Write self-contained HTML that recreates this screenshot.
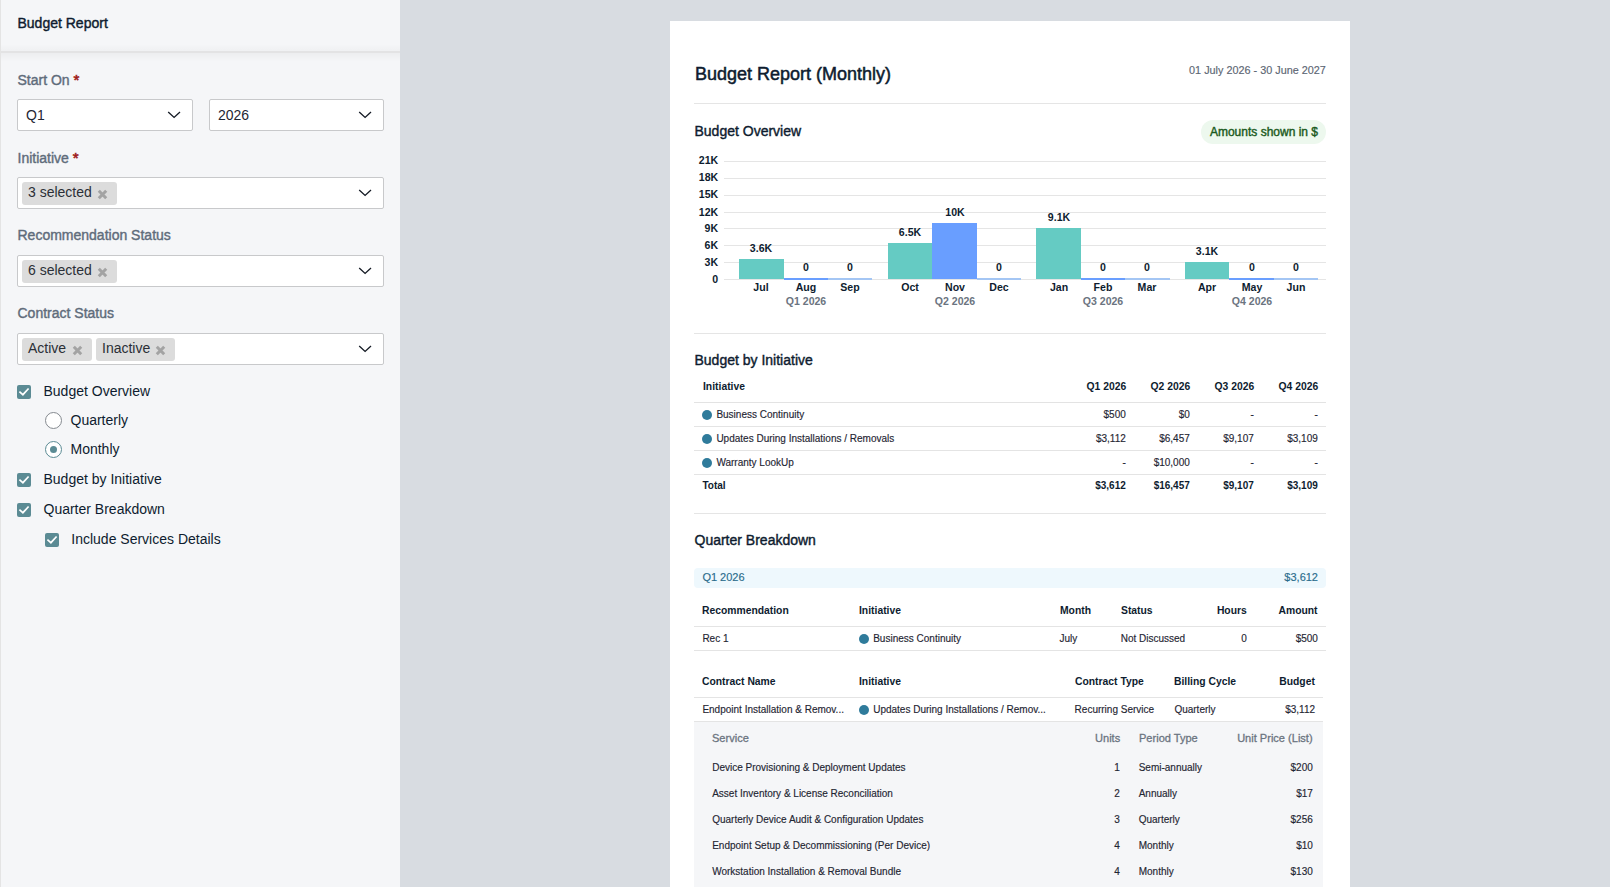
<!DOCTYPE html>
<html><head><meta charset="utf-8"><title>Budget Report</title>
<style>
html,body{margin:0;padding:0;width:1610px;height:887px;overflow:hidden;background:#d8dce1;}
body{position:relative;font-family:'Liberation Sans', sans-serif;}
.t{position:absolute;white-space:nowrap;line-height:1;}
.b{position:absolute;}
</style></head><body>
<div class="b" style="left:0px;top:0px;width:400px;height:887px;background:#f5f6f8;"></div>
<div class="b" style="left:0px;top:0px;width:1px;height:887px;background:#e4e4e4;"></div>
<div class="b" style="left:1px;top:44px;width:399px;height:7px;background:linear-gradient(rgba(0,0,0,0),rgba(0,0,0,0.022));"></div>
<div class="b" style="left:1px;top:51px;width:399px;height:1.5px;background:#e3e3e4;"></div>
<div class="b" style="left:1px;top:52.5px;width:399px;height:9px;background:linear-gradient(rgba(0,0,0,0.035),rgba(0,0,0,0));"></div>
<div class="t" style="left:17.50px;top:15.95px;font-size:14px;font-weight:normal;color:#0e1c2f;-webkit-text-stroke:0.4px #0e1c2f;">Budget Report</div>
<div class="t" style="left:17.50px;top:71.75px;font-size:14px;font-weight:normal;color:#5f6c7b;-webkit-text-stroke:0.4px #5f6c7b;">Start On <span style="color:#9f1d1d;-webkit-text-stroke:0.6px #9f1d1d;font-size:15px">*</span></div>
<div class="b" style="left:17px;top:99px;width:176px;height:32px;background:#fff;border:1px solid #c8c9cb;border-radius:2px;box-sizing:border-box;"></div>
<svg width="15" height="8" viewBox="0 0 15 8" style="position:absolute;left:167px;top:111px"><path d="M1.2 1 L7.1 6.4 L13 1" fill="none" stroke="#141a24" stroke-width="1.35"/></svg>
<div class="t" style="left:26.00px;top:108.35px;font-size:14px;font-weight:normal;color:#1f2633;">Q1</div>
<div class="b" style="left:209px;top:99px;width:175px;height:32px;background:#fff;border:1px solid #c8c9cb;border-radius:2px;box-sizing:border-box;"></div>
<svg width="15" height="8" viewBox="0 0 15 8" style="position:absolute;left:358px;top:111px"><path d="M1.2 1 L7.1 6.4 L13 1" fill="none" stroke="#141a24" stroke-width="1.35"/></svg>
<div class="t" style="left:218.00px;top:108.35px;font-size:14px;font-weight:normal;color:#1f2633;">2026</div>
<div class="t" style="left:17.50px;top:149.95px;font-size:14px;font-weight:normal;color:#5f6c7b;-webkit-text-stroke:0.4px #5f6c7b;">Initiative <span style="color:#9f1d1d;-webkit-text-stroke:0.6px #9f1d1d;font-size:15px">*</span></div>
<div class="b" style="left:17px;top:177px;width:367px;height:32px;background:#fff;border:1px solid #c8c9cb;border-radius:2px;box-sizing:border-box;"></div>
<svg width="15" height="8" viewBox="0 0 15 8" style="position:absolute;left:358px;top:189px"><path d="M1.2 1 L7.1 6.4 L13 1" fill="none" stroke="#141a24" stroke-width="1.35"/></svg>
<div class="b" style="left:22px;top:182px;width:95px;height:23px;background:#dcdcdc;border-radius:3px;"></div>
<div class="t" style="left:28.00px;top:184.95px;font-size:14px;font-weight:normal;color:#2b2f36;">3 selected</div>
<svg width="11" height="11" viewBox="0 0 11 11" style="position:absolute;left:97.2px;top:189px"><path d="M1.8 1.8 L9.2 9.2 M9.2 1.8 L1.8 9.2" stroke="#a3a3a3" stroke-width="3" stroke-linecap="butt"/></svg>
<div class="t" style="left:17.50px;top:227.85px;font-size:14px;font-weight:normal;color:#5f6c7b;-webkit-text-stroke:0.4px #5f6c7b;">Recommendation Status</div>
<div class="b" style="left:17px;top:255px;width:367px;height:32px;background:#fff;border:1px solid #c8c9cb;border-radius:2px;box-sizing:border-box;"></div>
<svg width="15" height="8" viewBox="0 0 15 8" style="position:absolute;left:358px;top:267px"><path d="M1.2 1 L7.1 6.4 L13 1" fill="none" stroke="#141a24" stroke-width="1.35"/></svg>
<div class="b" style="left:22px;top:260px;width:95px;height:23px;background:#dcdcdc;border-radius:3px;"></div>
<div class="t" style="left:28.00px;top:262.95px;font-size:14px;font-weight:normal;color:#2b2f36;">6 selected</div>
<svg width="11" height="11" viewBox="0 0 11 11" style="position:absolute;left:97.2px;top:267px"><path d="M1.8 1.8 L9.2 9.2 M9.2 1.8 L1.8 9.2" stroke="#a3a3a3" stroke-width="3" stroke-linecap="butt"/></svg>
<div class="t" style="left:17.50px;top:305.85px;font-size:14px;font-weight:normal;color:#5f6c7b;-webkit-text-stroke:0.4px #5f6c7b;">Contract Status</div>
<div class="b" style="left:17px;top:333px;width:367px;height:32px;background:#fff;border:1px solid #c8c9cb;border-radius:2px;box-sizing:border-box;"></div>
<svg width="15" height="8" viewBox="0 0 15 8" style="position:absolute;left:358px;top:345px"><path d="M1.2 1 L7.1 6.4 L13 1" fill="none" stroke="#141a24" stroke-width="1.35"/></svg>
<div class="b" style="left:22px;top:338px;width:70px;height:23px;background:#dcdcdc;border-radius:3px;"></div>
<div class="t" style="left:28.00px;top:340.95px;font-size:14px;font-weight:normal;color:#2b2f36;">Active</div>
<svg width="11" height="11" viewBox="0 0 11 11" style="position:absolute;left:72.2px;top:345px"><path d="M1.8 1.8 L9.2 9.2 M9.2 1.8 L1.8 9.2" stroke="#a3a3a3" stroke-width="3" stroke-linecap="butt"/></svg>
<div class="b" style="left:96px;top:338px;width:79px;height:23px;background:#dcdcdc;border-radius:3px;"></div>
<div class="t" style="left:102.00px;top:340.95px;font-size:14px;font-weight:normal;color:#2b2f36;">Inactive</div>
<svg width="11" height="11" viewBox="0 0 11 11" style="position:absolute;left:155.2px;top:345px"><path d="M1.8 1.8 L9.2 9.2 M9.2 1.8 L1.8 9.2" stroke="#a3a3a3" stroke-width="3" stroke-linecap="butt"/></svg>
<div class="b" style="left:17px;top:385px;width:14px;height:14px;background:#5b8b94;border-radius:2px;"><svg width="14" height="14" viewBox="0 0 14 14" style="position:absolute;left:0;top:0"><path d="M2.4 6.7 L5.9 9.7 L11.6 3.5" fill="none" stroke="#fff" stroke-width="1.7"/></svg></div>
<div class="t" style="left:43.50px;top:384.35px;font-size:14px;font-weight:normal;color:#0e1c2f;">Budget Overview</div>
<div class="b" style="left:45px;top:412px;width:17px;height:17px;border:1px solid #858a90;border-radius:50%;box-sizing:border-box;background:#fff;"></div>
<div class="t" style="left:70.50px;top:412.75px;font-size:14px;font-weight:normal;color:#0e1c2f;">Quarterly</div>
<div class="b" style="left:45px;top:441px;width:17px;height:17px;border:1px solid #5b8b94;border-radius:50%;box-sizing:border-box;background:#fff;"></div>
<div class="b" style="left:50px;top:446px;width:7px;height:7px;background:#5b8b94;border-radius:50%;"></div>
<div class="t" style="left:70.50px;top:441.75px;font-size:14px;font-weight:normal;color:#0e1c2f;">Monthly</div>
<div class="b" style="left:17px;top:473px;width:14px;height:14px;background:#5b8b94;border-radius:2px;"><svg width="14" height="14" viewBox="0 0 14 14" style="position:absolute;left:0;top:0"><path d="M2.4 6.7 L5.9 9.7 L11.6 3.5" fill="none" stroke="#fff" stroke-width="1.7"/></svg></div>
<div class="t" style="left:43.50px;top:472.35px;font-size:14px;font-weight:normal;color:#0e1c2f;">Budget by Initiative</div>
<div class="b" style="left:17px;top:503px;width:14px;height:14px;background:#5b8b94;border-radius:2px;"><svg width="14" height="14" viewBox="0 0 14 14" style="position:absolute;left:0;top:0"><path d="M2.4 6.7 L5.9 9.7 L11.6 3.5" fill="none" stroke="#fff" stroke-width="1.7"/></svg></div>
<div class="t" style="left:43.50px;top:502.35px;font-size:14px;font-weight:normal;color:#0e1c2f;">Quarter Breakdown</div>
<div class="b" style="left:45px;top:533px;width:14px;height:14px;background:#5b8b94;border-radius:2px;"><svg width="14" height="14" viewBox="0 0 14 14" style="position:absolute;left:0;top:0"><path d="M2.4 6.7 L5.9 9.7 L11.6 3.5" fill="none" stroke="#fff" stroke-width="1.7"/></svg></div>
<div class="t" style="left:71.30px;top:532.35px;font-size:14px;font-weight:normal;color:#0e1c2f;">Include Services Details</div>
<div class="b" style="left:400px;top:0px;width:1210px;height:887px;background:#d8dce1;"></div>
<div class="b" style="left:670px;top:21px;width:680px;height:866px;background:#fff;"></div>
<div class="t" style="left:695.00px;top:64.76px;font-size:18px;font-weight:normal;color:#0e1c2f;-webkit-text-stroke:0.5px #0e1c2f;">Budget Report (Monthly)</div>
<div class="t" style="right:284.40px;top:65.29px;font-size:11px;font-weight:normal;color:#5c6673;-webkit-text-stroke:0.15px #5c6673;transform:scaleX(0.985);transform-origin:right center;">01 July 2026 - 30 June 2027</div>
<div class="b" style="left:694px;top:103px;width:632px;height:1px;background:#e5e5e5;"></div>
<div class="t" style="left:694.50px;top:124.15px;font-size:14px;font-weight:normal;color:#0e1c2f;-webkit-text-stroke:0.4px #0e1c2f;">Budget Overview</div>
<div class="b" style="left:1201px;top:120px;width:125px;height:24px;background:#edf8ee;border-radius:12px;"></div>
<div class="t" style="right:292.00px;top:126.24px;font-size:12px;font-weight:normal;color:#1b5a20;-webkit-text-stroke:0.4px #1b5a20;">Amounts shown in $</div>
<div class="b" style="left:724px;top:279px;width:602px;height:1px;background:#e5e5e5;"></div>
<div class="t" style="right:891.50px;top:273.89px;font-size:11px;font-weight:bold;color:#0e1c2f;transform:scaleX(0.96);transform-origin:right center;">0</div>
<div class="b" style="left:724px;top:262px;width:602px;height:1px;background:#e5e5e5;"></div>
<div class="t" style="right:891.50px;top:256.89px;font-size:11px;font-weight:bold;color:#0e1c2f;transform:scaleX(0.96);transform-origin:right center;">3K</div>
<div class="b" style="left:724px;top:245px;width:602px;height:1px;background:#e5e5e5;"></div>
<div class="t" style="right:891.50px;top:239.89px;font-size:11px;font-weight:bold;color:#0e1c2f;transform:scaleX(0.96);transform-origin:right center;">6K</div>
<div class="b" style="left:724px;top:228px;width:602px;height:1px;background:#e5e5e5;"></div>
<div class="t" style="right:891.50px;top:222.89px;font-size:11px;font-weight:bold;color:#0e1c2f;transform:scaleX(0.96);transform-origin:right center;">9K</div>
<div class="b" style="left:724px;top:212px;width:602px;height:1px;background:#e5e5e5;"></div>
<div class="t" style="right:891.50px;top:206.89px;font-size:11px;font-weight:bold;color:#0e1c2f;transform:scaleX(0.96);transform-origin:right center;">12K</div>
<div class="b" style="left:724px;top:195px;width:602px;height:1px;background:#e5e5e5;"></div>
<div class="t" style="right:891.50px;top:188.89px;font-size:11px;font-weight:bold;color:#0e1c2f;transform:scaleX(0.96);transform-origin:right center;">15K</div>
<div class="b" style="left:724px;top:178px;width:602px;height:1px;background:#e5e5e5;"></div>
<div class="t" style="right:891.50px;top:171.89px;font-size:11px;font-weight:bold;color:#0e1c2f;transform:scaleX(0.96);transform-origin:right center;">18K</div>
<div class="b" style="left:724px;top:161px;width:602px;height:1px;background:#e5e5e5;"></div>
<div class="t" style="right:891.50px;top:154.89px;font-size:11px;font-weight:bold;color:#0e1c2f;transform:scaleX(0.96);transform-origin:right center;">21K</div>
<div class="b" style="left:739px;top:258.94px;width:45px;height:20.26px;background:#65cbc3;"></div>
<div class="t" style="left:461.30px;width:600px;text-align:center;top:243.13px;font-size:11px;font-weight:bold;color:#0e1c2f;transform:scaleX(0.96);transform-origin:center center;">3.6K</div>
<div class="t" style="left:461.30px;width:600px;text-align:center;top:282.19px;font-size:11px;font-weight:bold;color:#0e1c2f;transform:scaleX(0.96);transform-origin:center center;">Jul</div>
<div class="b" style="left:784px;top:277.5px;width:44px;height:2px;background:#699eff;"></div>
<div class="t" style="left:505.70px;width:600px;text-align:center;top:261.79px;font-size:11px;font-weight:bold;color:#0e1c2f;transform:scaleX(0.96);transform-origin:center center;">0</div>
<div class="t" style="left:505.70px;width:600px;text-align:center;top:282.19px;font-size:11px;font-weight:bold;color:#0e1c2f;transform:scaleX(0.96);transform-origin:center center;">Aug</div>
<div class="b" style="left:828px;top:277.5px;width:44px;height:2px;background:#a4c6f4;"></div>
<div class="t" style="left:550.10px;width:600px;text-align:center;top:261.79px;font-size:11px;font-weight:bold;color:#0e1c2f;transform:scaleX(0.96);transform-origin:center center;">0</div>
<div class="t" style="left:550.10px;width:600px;text-align:center;top:282.19px;font-size:11px;font-weight:bold;color:#0e1c2f;transform:scaleX(0.96);transform-origin:center center;">Sep</div>
<div class="t" style="left:505.70px;width:600px;text-align:center;top:295.99px;font-size:11px;font-weight:bold;color:#6b7480;transform:scaleX(0.96);transform-origin:center center;">Q1 2026</div>
<div class="b" style="left:888px;top:242.98px;width:44px;height:36.22px;background:#65cbc3;"></div>
<div class="t" style="left:610.20px;width:600px;text-align:center;top:227.17px;font-size:11px;font-weight:bold;color:#0e1c2f;transform:scaleX(0.96);transform-origin:center center;">6.5K</div>
<div class="t" style="left:610.20px;width:600px;text-align:center;top:282.19px;font-size:11px;font-weight:bold;color:#0e1c2f;transform:scaleX(0.96);transform-origin:center center;">Oct</div>
<div class="b" style="left:932px;top:223.1px;width:45px;height:56.1px;background:#699eff;"></div>
<div class="t" style="left:654.60px;width:600px;text-align:center;top:207.29px;font-size:11px;font-weight:bold;color:#0e1c2f;transform:scaleX(0.96);transform-origin:center center;">10K</div>
<div class="t" style="left:654.60px;width:600px;text-align:center;top:282.19px;font-size:11px;font-weight:bold;color:#0e1c2f;transform:scaleX(0.96);transform-origin:center center;">Nov</div>
<div class="b" style="left:977px;top:277.5px;width:44px;height:2px;background:#a4c6f4;"></div>
<div class="t" style="left:699.00px;width:600px;text-align:center;top:261.79px;font-size:11px;font-weight:bold;color:#0e1c2f;transform:scaleX(0.96);transform-origin:center center;">0</div>
<div class="t" style="left:699.00px;width:600px;text-align:center;top:282.19px;font-size:11px;font-weight:bold;color:#0e1c2f;transform:scaleX(0.96);transform-origin:center center;">Dec</div>
<div class="t" style="left:654.60px;width:600px;text-align:center;top:295.99px;font-size:11px;font-weight:bold;color:#6b7480;transform:scaleX(0.96);transform-origin:center center;">Q2 2026</div>
<div class="b" style="left:1036px;top:228.11px;width:45px;height:51.09px;background:#65cbc3;"></div>
<div class="t" style="left:758.60px;width:600px;text-align:center;top:212.30px;font-size:11px;font-weight:bold;color:#0e1c2f;transform:scaleX(0.96);transform-origin:center center;">9.1K</div>
<div class="t" style="left:758.60px;width:600px;text-align:center;top:282.19px;font-size:11px;font-weight:bold;color:#0e1c2f;transform:scaleX(0.96);transform-origin:center center;">Jan</div>
<div class="b" style="left:1081px;top:277.5px;width:44px;height:2px;background:#699eff;"></div>
<div class="t" style="left:803.00px;width:600px;text-align:center;top:261.79px;font-size:11px;font-weight:bold;color:#0e1c2f;transform:scaleX(0.96);transform-origin:center center;">0</div>
<div class="t" style="left:803.00px;width:600px;text-align:center;top:282.19px;font-size:11px;font-weight:bold;color:#0e1c2f;transform:scaleX(0.96);transform-origin:center center;">Feb</div>
<div class="b" style="left:1125px;top:277.5px;width:45px;height:2px;background:#a4c6f4;"></div>
<div class="t" style="left:847.40px;width:600px;text-align:center;top:261.79px;font-size:11px;font-weight:bold;color:#0e1c2f;transform:scaleX(0.96);transform-origin:center center;">0</div>
<div class="t" style="left:847.40px;width:600px;text-align:center;top:282.19px;font-size:11px;font-weight:bold;color:#0e1c2f;transform:scaleX(0.96);transform-origin:center center;">Mar</div>
<div class="t" style="left:803.00px;width:600px;text-align:center;top:295.99px;font-size:11px;font-weight:bold;color:#6b7480;transform:scaleX(0.96);transform-origin:center center;">Q3 2026</div>
<div class="b" style="left:1185px;top:261.76px;width:44px;height:17.44px;background:#65cbc3;"></div>
<div class="t" style="left:907.20px;width:600px;text-align:center;top:245.95px;font-size:11px;font-weight:bold;color:#0e1c2f;transform:scaleX(0.96);transform-origin:center center;">3.1K</div>
<div class="t" style="left:907.20px;width:600px;text-align:center;top:282.19px;font-size:11px;font-weight:bold;color:#0e1c2f;transform:scaleX(0.96);transform-origin:center center;">Apr</div>
<div class="b" style="left:1229px;top:277.5px;width:45px;height:2px;background:#699eff;"></div>
<div class="t" style="left:951.60px;width:600px;text-align:center;top:261.79px;font-size:11px;font-weight:bold;color:#0e1c2f;transform:scaleX(0.96);transform-origin:center center;">0</div>
<div class="t" style="left:951.60px;width:600px;text-align:center;top:282.19px;font-size:11px;font-weight:bold;color:#0e1c2f;transform:scaleX(0.96);transform-origin:center center;">May</div>
<div class="b" style="left:1274px;top:277.5px;width:44px;height:2px;background:#a4c6f4;"></div>
<div class="t" style="left:996.00px;width:600px;text-align:center;top:261.79px;font-size:11px;font-weight:bold;color:#0e1c2f;transform:scaleX(0.96);transform-origin:center center;">0</div>
<div class="t" style="left:996.00px;width:600px;text-align:center;top:282.19px;font-size:11px;font-weight:bold;color:#0e1c2f;transform:scaleX(0.96);transform-origin:center center;">Jun</div>
<div class="t" style="left:951.60px;width:600px;text-align:center;top:295.99px;font-size:11px;font-weight:bold;color:#6b7480;transform:scaleX(0.96);transform-origin:center center;">Q4 2026</div>
<div class="b" style="left:694px;top:333px;width:632px;height:1px;background:#e5e5e5;"></div>
<div class="t" style="left:694.50px;top:353.15px;font-size:14px;font-weight:normal;color:#0e1c2f;-webkit-text-stroke:0.4px #0e1c2f;">Budget by Initiative</div>
<div class="t" style="left:702.50px;top:380.99px;font-size:11px;font-weight:bold;color:#0e1c2f;transform:scaleX(0.94);transform-origin:left center;">Initiative</div>
<div class="t" style="right:484.20px;top:380.99px;font-size:11px;font-weight:bold;color:#0e1c2f;transform:scaleX(0.94);transform-origin:right center;">Q1 2026</div>
<div class="t" style="right:420.20px;top:380.99px;font-size:11px;font-weight:bold;color:#0e1c2f;transform:scaleX(0.94);transform-origin:right center;">Q2 2026</div>
<div class="t" style="right:356.20px;top:380.99px;font-size:11px;font-weight:bold;color:#0e1c2f;transform:scaleX(0.94);transform-origin:right center;">Q3 2026</div>
<div class="t" style="right:292.20px;top:380.99px;font-size:11px;font-weight:bold;color:#0e1c2f;transform:scaleX(0.94);transform-origin:right center;">Q4 2026</div>
<div class="b" style="left:694px;top:402px;width:632px;height:1px;background:#e3e3e3;"></div>
<div class="b" style="left:702px;top:409.7px;width:10px;height:10px;background:#2f7b9b;border-radius:50%;"></div>
<div class="t" style="left:716.40px;top:410.34px;font-size:10px;font-weight:normal;color:#1f2633;-webkit-text-stroke:0.15px #1f2633;">Business Continuity</div>
<div class="t" style="right:484.20px;top:410.34px;font-size:10px;font-weight:normal;color:#1f2633;-webkit-text-stroke:0.15px #1f2633;">$500</div>
<div class="t" style="right:420.20px;top:410.34px;font-size:10px;font-weight:normal;color:#1f2633;-webkit-text-stroke:0.15px #1f2633;">$0</div>
<div class="t" style="right:356.20px;top:410.34px;font-size:10px;font-weight:normal;color:#1f2633;-webkit-text-stroke:0.15px #1f2633;">-</div>
<div class="t" style="right:292.20px;top:410.34px;font-size:10px;font-weight:normal;color:#1f2633;-webkit-text-stroke:0.15px #1f2633;">-</div>
<div class="b" style="left:694px;top:426px;width:632px;height:1px;background:#e4e4e4;"></div>
<div class="b" style="left:702px;top:433.7px;width:10px;height:10px;background:#2f7b9b;border-radius:50%;"></div>
<div class="t" style="left:716.40px;top:434.34px;font-size:10px;font-weight:normal;color:#1f2633;-webkit-text-stroke:0.15px #1f2633;">Updates During Installations / Removals</div>
<div class="t" style="right:484.20px;top:434.34px;font-size:10px;font-weight:normal;color:#1f2633;-webkit-text-stroke:0.15px #1f2633;">$3,112</div>
<div class="t" style="right:420.20px;top:434.34px;font-size:10px;font-weight:normal;color:#1f2633;-webkit-text-stroke:0.15px #1f2633;">$6,457</div>
<div class="t" style="right:356.20px;top:434.34px;font-size:10px;font-weight:normal;color:#1f2633;-webkit-text-stroke:0.15px #1f2633;">$9,107</div>
<div class="t" style="right:292.20px;top:434.34px;font-size:10px;font-weight:normal;color:#1f2633;-webkit-text-stroke:0.15px #1f2633;">$3,109</div>
<div class="b" style="left:694px;top:450px;width:632px;height:1px;background:#e4e4e4;"></div>
<div class="b" style="left:702px;top:457.7px;width:10px;height:10px;background:#2f7b9b;border-radius:50%;"></div>
<div class="t" style="left:716.40px;top:458.34px;font-size:10px;font-weight:normal;color:#1f2633;-webkit-text-stroke:0.15px #1f2633;">Warranty LookUp</div>
<div class="t" style="right:484.20px;top:458.34px;font-size:10px;font-weight:normal;color:#1f2633;-webkit-text-stroke:0.15px #1f2633;">-</div>
<div class="t" style="right:420.20px;top:458.34px;font-size:10px;font-weight:normal;color:#1f2633;-webkit-text-stroke:0.15px #1f2633;">$10,000</div>
<div class="t" style="right:356.20px;top:458.34px;font-size:10px;font-weight:normal;color:#1f2633;-webkit-text-stroke:0.15px #1f2633;">-</div>
<div class="t" style="right:292.20px;top:458.34px;font-size:10px;font-weight:normal;color:#1f2633;-webkit-text-stroke:0.15px #1f2633;">-</div>
<div class="b" style="left:694px;top:474px;width:632px;height:1px;background:#e4e4e4;"></div>
<div class="t" style="left:702.50px;top:480.74px;font-size:10px;font-weight:bold;color:#0e1c2f;">Total</div>
<div class="t" style="right:484.20px;top:480.74px;font-size:10px;font-weight:bold;color:#0e1c2f;">$3,612</div>
<div class="t" style="right:420.20px;top:480.74px;font-size:10px;font-weight:bold;color:#0e1c2f;">$16,457</div>
<div class="t" style="right:356.20px;top:480.74px;font-size:10px;font-weight:bold;color:#0e1c2f;">$9,107</div>
<div class="t" style="right:292.20px;top:480.74px;font-size:10px;font-weight:bold;color:#0e1c2f;">$3,109</div>
<div class="b" style="left:694px;top:513px;width:632px;height:1px;background:#e5e5e5;"></div>
<div class="t" style="left:694.50px;top:533.45px;font-size:14px;font-weight:normal;color:#0e1c2f;-webkit-text-stroke:0.4px #0e1c2f;">Quarter Breakdown</div>
<div class="b" style="left:694px;top:568px;width:632px;height:20px;background:#eef8fd;border-radius:4px;"></div>
<div class="t" style="left:702.40px;top:572.09px;font-size:11px;font-weight:normal;color:#2a6c8c;-webkit-text-stroke:0.15px #2a6c8c;">Q1 2026</div>
<div class="t" style="right:292.00px;top:572.09px;font-size:11px;font-weight:normal;color:#2a6c8c;-webkit-text-stroke:0.15px #2a6c8c;">$3,612</div>
<div class="t" style="left:702.40px;top:605.29px;font-size:11px;font-weight:bold;color:#0e1c2f;transform:scaleX(0.94);transform-origin:left center;">Recommendation</div>
<div class="t" style="left:859.00px;top:605.29px;font-size:11px;font-weight:bold;color:#0e1c2f;transform:scaleX(0.94);transform-origin:left center;">Initiative</div>
<div class="t" style="left:1059.50px;top:605.29px;font-size:11px;font-weight:bold;color:#0e1c2f;transform:scaleX(0.94);transform-origin:left center;">Month</div>
<div class="t" style="left:1120.70px;top:605.29px;font-size:11px;font-weight:bold;color:#0e1c2f;transform:scaleX(0.94);transform-origin:left center;">Status</div>
<div class="t" style="right:363.20px;top:605.29px;font-size:11px;font-weight:bold;color:#0e1c2f;transform:scaleX(0.94);transform-origin:right center;">Hours</div>
<div class="t" style="right:292.10px;top:605.29px;font-size:11px;font-weight:bold;color:#0e1c2f;transform:scaleX(0.94);transform-origin:right center;">Amount</div>
<div class="b" style="left:694px;top:626px;width:632px;height:1px;background:#e4e4e4;"></div>
<div class="t" style="left:702.40px;top:634.33px;font-size:10px;font-weight:normal;color:#1f2633;-webkit-text-stroke:0.15px #1f2633;">Rec 1</div>
<div class="b" style="left:859px;top:634px;width:10px;height:10px;background:#2f7b9b;border-radius:50%;"></div>
<div class="t" style="left:873.20px;top:634.33px;font-size:10px;font-weight:normal;color:#1f2633;-webkit-text-stroke:0.15px #1f2633;">Business Continuity</div>
<div class="t" style="left:1059.50px;top:634.33px;font-size:10px;font-weight:normal;color:#1f2633;-webkit-text-stroke:0.15px #1f2633;">July</div>
<div class="t" style="left:1120.70px;top:634.33px;font-size:10px;font-weight:normal;color:#1f2633;-webkit-text-stroke:0.15px #1f2633;">Not Discussed</div>
<div class="t" style="right:363.20px;top:634.33px;font-size:10px;font-weight:normal;color:#1f2633;-webkit-text-stroke:0.15px #1f2633;">0</div>
<div class="t" style="right:292.10px;top:634.33px;font-size:10px;font-weight:normal;color:#1f2633;-webkit-text-stroke:0.15px #1f2633;">$500</div>
<div class="b" style="left:694px;top:650px;width:632px;height:1px;background:#e4e4e4;"></div>
<div class="t" style="left:702.40px;top:675.89px;font-size:11px;font-weight:bold;color:#0e1c2f;transform:scaleX(0.94);transform-origin:left center;">Contract Name</div>
<div class="t" style="left:859.00px;top:675.89px;font-size:11px;font-weight:bold;color:#0e1c2f;transform:scaleX(0.94);transform-origin:left center;">Initiative</div>
<div class="t" style="left:1074.60px;top:675.89px;font-size:11px;font-weight:bold;color:#0e1c2f;transform:scaleX(0.94);transform-origin:left center;">Contract Type</div>
<div class="t" style="left:1174.40px;top:675.89px;font-size:11px;font-weight:bold;color:#0e1c2f;transform:scaleX(0.94);transform-origin:left center;">Billing Cycle</div>
<div class="t" style="right:295.00px;top:675.89px;font-size:11px;font-weight:bold;color:#0e1c2f;transform:scaleX(0.94);transform-origin:right center;">Budget</div>
<div class="b" style="left:694px;top:697px;width:629px;height:1px;background:#e4e4e4;"></div>
<div class="t" style="left:702.40px;top:705.43px;font-size:10px;font-weight:normal;color:#1f2633;-webkit-text-stroke:0.15px #1f2633;">Endpoint Installation &amp; Remov...</div>
<div class="b" style="left:859px;top:705px;width:10px;height:10px;background:#2f7b9b;border-radius:50%;"></div>
<div class="t" style="left:873.20px;top:705.43px;font-size:10px;font-weight:normal;color:#1f2633;-webkit-text-stroke:0.15px #1f2633;">Updates During Installations / Remov...</div>
<div class="t" style="left:1074.60px;top:705.43px;font-size:10px;font-weight:normal;color:#1f2633;-webkit-text-stroke:0.15px #1f2633;">Recurring Service</div>
<div class="t" style="left:1174.40px;top:705.43px;font-size:10px;font-weight:normal;color:#1f2633;-webkit-text-stroke:0.15px #1f2633;">Quarterly</div>
<div class="t" style="right:295.00px;top:705.43px;font-size:10px;font-weight:normal;color:#1f2633;-webkit-text-stroke:0.15px #1f2633;">$3,112</div>
<div class="b" style="left:694px;top:721px;width:629px;height:1px;background:#e4e4e4;"></div>
<div class="b" style="left:694px;top:722px;width:629px;height:165px;background:#f5f6f8;"></div>
<div class="t" style="left:712.20px;top:733.27px;font-size:11.5px;font-weight:normal;color:#6b7480;transform:scaleX(0.96);transform-origin:left center;-webkit-text-stroke:0.3px #6b7480;">Service</div>
<div class="t" style="right:490.10px;top:733.27px;font-size:11.5px;font-weight:normal;color:#6b7480;transform:scaleX(0.96);transform-origin:right center;-webkit-text-stroke:0.3px #6b7480;">Units</div>
<div class="t" style="left:1138.70px;top:733.27px;font-size:11.5px;font-weight:normal;color:#6b7480;transform:scaleX(0.96);transform-origin:left center;-webkit-text-stroke:0.3px #6b7480;">Period Type</div>
<div class="t" style="right:297.20px;top:733.27px;font-size:11.5px;font-weight:normal;color:#6b7480;transform:scaleX(0.96);transform-origin:right center;-webkit-text-stroke:0.3px #6b7480;">Unit Price (List)</div>
<div class="t" style="left:712.20px;top:763.13px;font-size:10px;font-weight:normal;color:#1f2633;-webkit-text-stroke:0.15px #1f2633;">Device Provisioning &amp; Deployment Updates</div>
<div class="t" style="right:490.10px;top:763.13px;font-size:10px;font-weight:normal;color:#1f2633;-webkit-text-stroke:0.15px #1f2633;">1</div>
<div class="t" style="left:1138.70px;top:763.13px;font-size:10px;font-weight:normal;color:#1f2633;-webkit-text-stroke:0.15px #1f2633;">Semi-annually</div>
<div class="t" style="right:297.20px;top:763.13px;font-size:10px;font-weight:normal;color:#1f2633;-webkit-text-stroke:0.15px #1f2633;">$200</div>
<div class="t" style="left:712.20px;top:789.13px;font-size:10px;font-weight:normal;color:#1f2633;-webkit-text-stroke:0.15px #1f2633;">Asset Inventory &amp; License Reconciliation</div>
<div class="t" style="right:490.10px;top:789.13px;font-size:10px;font-weight:normal;color:#1f2633;-webkit-text-stroke:0.15px #1f2633;">2</div>
<div class="t" style="left:1138.70px;top:789.13px;font-size:10px;font-weight:normal;color:#1f2633;-webkit-text-stroke:0.15px #1f2633;">Annually</div>
<div class="t" style="right:297.20px;top:789.13px;font-size:10px;font-weight:normal;color:#1f2633;-webkit-text-stroke:0.15px #1f2633;">$17</div>
<div class="t" style="left:712.20px;top:815.13px;font-size:10px;font-weight:normal;color:#1f2633;-webkit-text-stroke:0.15px #1f2633;">Quarterly Device Audit &amp; Configuration Updates</div>
<div class="t" style="right:490.10px;top:815.13px;font-size:10px;font-weight:normal;color:#1f2633;-webkit-text-stroke:0.15px #1f2633;">3</div>
<div class="t" style="left:1138.70px;top:815.13px;font-size:10px;font-weight:normal;color:#1f2633;-webkit-text-stroke:0.15px #1f2633;">Quarterly</div>
<div class="t" style="right:297.20px;top:815.13px;font-size:10px;font-weight:normal;color:#1f2633;-webkit-text-stroke:0.15px #1f2633;">$256</div>
<div class="t" style="left:712.20px;top:841.13px;font-size:10px;font-weight:normal;color:#1f2633;-webkit-text-stroke:0.15px #1f2633;">Endpoint Setup &amp; Decommissioning (Per Device)</div>
<div class="t" style="right:490.10px;top:841.13px;font-size:10px;font-weight:normal;color:#1f2633;-webkit-text-stroke:0.15px #1f2633;">4</div>
<div class="t" style="left:1138.70px;top:841.13px;font-size:10px;font-weight:normal;color:#1f2633;-webkit-text-stroke:0.15px #1f2633;">Monthly</div>
<div class="t" style="right:297.20px;top:841.13px;font-size:10px;font-weight:normal;color:#1f2633;-webkit-text-stroke:0.15px #1f2633;">$10</div>
<div class="t" style="left:712.20px;top:867.13px;font-size:10px;font-weight:normal;color:#1f2633;-webkit-text-stroke:0.15px #1f2633;">Workstation Installation &amp; Removal Bundle</div>
<div class="t" style="right:490.10px;top:867.13px;font-size:10px;font-weight:normal;color:#1f2633;-webkit-text-stroke:0.15px #1f2633;">4</div>
<div class="t" style="left:1138.70px;top:867.13px;font-size:10px;font-weight:normal;color:#1f2633;-webkit-text-stroke:0.15px #1f2633;">Monthly</div>
<div class="t" style="right:297.20px;top:867.13px;font-size:10px;font-weight:normal;color:#1f2633;-webkit-text-stroke:0.15px #1f2633;">$130</div>
</body></html>
